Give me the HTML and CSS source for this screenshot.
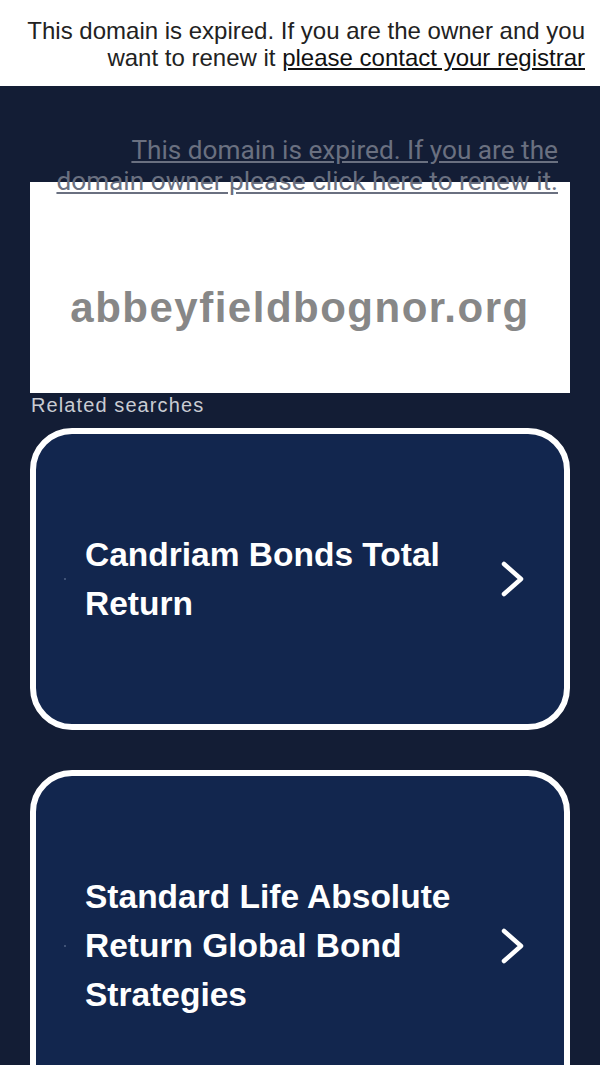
FILE: index.html
```html
<!DOCTYPE html>
<html lang="en">
<head>
<meta charset="utf-8">
<title>abbeyfieldbognor.org</title>
<link rel="stylesheet" href="styles.css">
</head>
<body>
<div class="topbar">This domain is expired. If you are the owner and you want to renew it <a href="#" class="toplink">please contact your registrar</a></div>
<div class="main">
  <div class="renew"><a href="#" class="renew-link">This domain is expired. If you are the domain owner please click here to renew it.</a></div>
  <div class="domainbox"><span class="domain">abbeyfieldbognor.org</span></div>
  <div class="related">Related searches</div>
  <div class="cards">
    <a href="#" class="card">
      <span class="dot"></span>
      <span class="card-text">Candriam Bonds Total Return</span>
      <svg class="chev" width="24" height="36" viewBox="0 0 24 36"><polyline points="3,3 20,18 3,33" fill="none" stroke="#fff" stroke-width="4.5" stroke-linecap="round" stroke-linejoin="round"/></svg>
    </a>
    <a href="#" class="card">
      <span class="dot"></span>
      <span class="card-text">Standard Life Absolute Return Global Bond Strategies</span>
      <svg class="chev" width="24" height="36" viewBox="0 0 24 36"><polyline points="3,3 20,18 3,33" fill="none" stroke="#fff" stroke-width="4.5" stroke-linecap="round" stroke-linejoin="round"/></svg>
    </a>
  </div>
</div>
</body>
</html>
```
FILE: styles.css
```css
html, body {
  margin: 0;
  padding: 0;
}
body {
  background: #131d35;
  font-family: "Liberation Sans", Arial, sans-serif;
}
.topbar {
  background: #fff;
  color: #222;
  font-size: 24px;
  line-height: 27px;
  text-align: right;
  padding: 17px 15px 15px 20px;
}
.toplink {
  color: #111;
  text-decoration: underline;
}
.main {
  padding: 0 30px;
}
.renew {
  text-align: right;
  padding: 49px 12px 0 20px;
  margin-bottom: -15px;
  font-family: Roboto, "Liberation Sans", sans-serif;
  font-size: 26.2px;
  line-height: 31px;
}
.renew-link {
  color: #6a7080;
  text-decoration: underline;
}
.domainbox {
  background: #fff;
  height: 211px;
  box-sizing: border-box;
  padding-top: 103px;
  text-align: center;
}
.domain {
  font-size: 42px;
  font-weight: bold;
  color: #878787;
  line-height: 46px;
  letter-spacing: 1.5px;
}
.related {
  color: #c9ccd3;
  font-size: 20px;
  line-height: 24px;
  padding-left: 1px;
  letter-spacing: 1.1px;
}
.cards {
  display: flex;
  flex-direction: column;
  gap: 40px;
  margin-top: 11px;
}
.card {
  display: flex;
  align-items: center;
  background: #12264e;
  border: 6px solid #fff;
  border-radius: 42px;
  padding: 96px 39px 96px 28px;
  text-decoration: none;
  color: #fff;
}
.dot {
  width: 2px;
  height: 2px;
  background: #3f5276;
  margin-right: 19px;
  flex: none;
}
.card-text {
  flex: 1;
  font-size: 33.5px;
  font-weight: bold;
  line-height: 49px;
  padding-right: 30px;
}
.chev {
  flex: none;
  display: block;
}
```
